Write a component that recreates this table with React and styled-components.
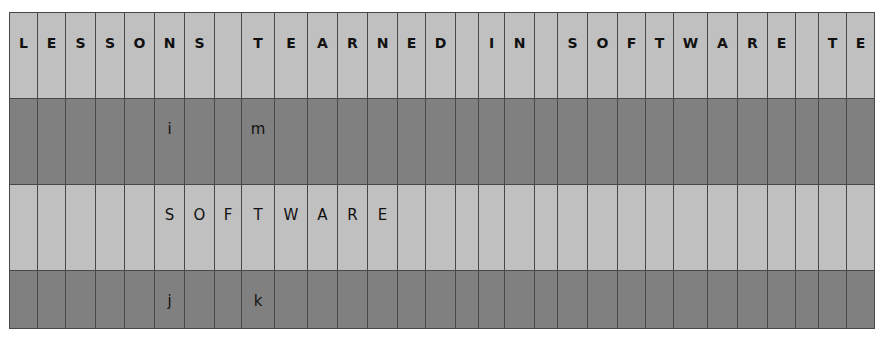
import styled, { createGlobalStyle } from "styled-components";

const GlobalStyle = createGlobalStyle`
  html, body {
    margin: 0;
    padding: 0;
    background: #ffffff;
  }
`;

const WIDTHS = [
  28, 28, 30, 29, 30, 30, 30, 27, 33, 33, 30, 30, 30, 28, 30, 23, 26, 30, 23,
  30, 30, 28, 28, 34, 30, 30, 28, 23, 28, 28,
];

const HEADER = "LESSONS TEARNED IN SOFTWARE TE".split("");

const fill = (entries) => {
  const cells = WIDTHS.map(() => "");
  Object.entries(entries).forEach(([i, ch]) => {
    cells[i] = ch;
  });
  return cells;
};

const ROWS = [
  { tone: "dark", height: 86, cells: fill({ 5: "i", 8: "m" }) },
  {
    tone: "light",
    height: 86,
    cells: fill(
      Object.fromEntries("SOFTWARE".split("").map((c, i) => [i + 5, c]))
    ),
  },
  { tone: "dark", height: 58, cells: fill({ 5: "j", 8: "k" }) },
];

const Page = styled.div`
  padding: 12px 0 0 9px;
`;

const Table = styled.div`
  display: grid;
  grid-template-columns: ${WIDTHS.map((w) => `${w}px`).join(" ")};
  width: max-content;
  border-top: 1px solid #484848;
  border-left: 1px solid #484848;
  font-family: "DejaVu Sans", Verdana, sans-serif;
  font-size: 15px;
  line-height: 18px;
  color: #111;
`;

const Cell = styled.div`
  box-sizing: border-box;
  height: ${(p) => p.$height}px;
  padding-top: 21px;
  text-align: center;
  border-right: 1px solid #484848;
  border-bottom: 1px solid #484848;
  background: ${(p) => (p.$tone === "dark" ? "#808080" : "#c0c0c0")};
  font-weight: ${(p) => (p.$head ? 700 : 400)};
  font-size: ${(p) => (p.$head ? "14px" : "15px")};
`;

const App = () => (
  <Page>
    <GlobalStyle />
    <Table>
      {HEADER.map((ch, i) => (
        <Cell key={`h${i}`} $head $tone="light" $height={86}>
          {ch.trim()}
        </Cell>
      ))}
      {ROWS.map((row, r) =>
        row.cells.map((ch, i) => (
          <Cell key={`${r}-${i}`} $tone={row.tone} $height={row.height}>
            {ch}
          </Cell>
        ))
      )}
    </Table>
  </Page>
);

export default App;
